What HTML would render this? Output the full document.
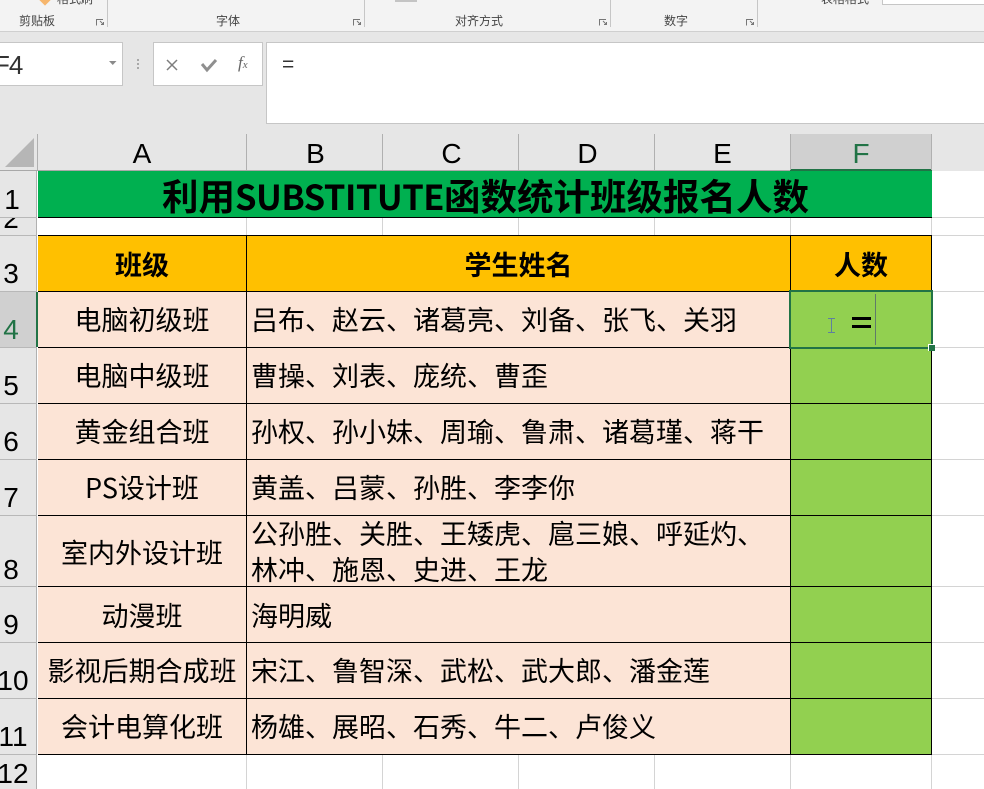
<!DOCTYPE html>
<html lang="zh"><head><meta charset="utf-8">
<style>
html,body{margin:0;padding:0;background:#fff}
#p{position:relative;width:984px;height:789px;overflow:hidden;background:#fff;font-family:"Liberation Sans","Noto Sans CJK SC",sans-serif;color:#000}
#p div{position:absolute;box-sizing:border-box}
.t{white-space:nowrap;font-family:"Noto Sans CJK SC","Liberation Sans",sans-serif;font-size:27px;line-height:40px;height:40px}
.c{text-align:center}
.hd{font-size:28px;line-height:36px;top:136px;height:36px;text-align:center;font-family:"Liberation Sans",sans-serif}
.rn{font-size:28px;line-height:34px;left:0;width:24px;text-align:center;font-family:"Liberation Sans",sans-serif}
.rb{font-size:12px;line-height:16px;color:#444;font-family:"Noto Sans CJK SC",sans-serif;top:13px;white-space:nowrap}
.s{background:#c6c6c6}
.b{background:#000}
</style></head><body><div id="p">
<!-- ribbon -->
<div style="left:0;top:0;width:984px;height:32px;background:#f3f3f3;border-bottom:1px solid #cfcfcf"></div>
<div style="left:0;top:32px;width:984px;height:102px;background:#e6e6e6"></div>
<div class="s" style="left:107px;top:0;width:1px;height:27px"></div>
<div class="s" style="left:364px;top:0;width:1px;height:27px"></div>
<div class="s" style="left:610px;top:0;width:1px;height:27px"></div>
<div class="s" style="left:757px;top:0;width:1px;height:27px"></div>
<div class="rb" style="left:19px">剪贴板</div>
<div class="rb" style="left:216px">字体</div>
<div class="rb" style="left:455px">对齐方式</div>
<div class="rb" style="left:664px">数字</div>
<div class="rb" style="left:821px;top:-9px">表格格式</div>
<div style="left:57px;top:-9px;font-size:12px;line-height:16px;color:#444;font-family:'Noto Sans CJK SC',sans-serif;white-space:nowrap">格式刷</div>
<div style="left:41px;top:-4px;width:8px;height:8px;background:#f6b66d;transform:rotate(45deg)"></div>
<div style="left:395px;top:0;width:22px;height:2px;background:#c4c4c4"></div>
<div style="left:882px;top:0;width:102px;height:5px;background:#fff;border-left:1px solid #c6c6c6;border-bottom:1px solid #c6c6c6"></div>
<svg style="position:absolute;left:0;top:0" width="984" height="32" fill="none" stroke="#777" stroke-width="1">
<path d="M96.500 25.500V19.500H103M100 21L103.500 24.500M103.500 22V24.500H101"/>
<path d="M353.500 25.500V19.500H360M357 21L360.500 24.500M360.500 22V24.500H358"/>
<path d="M599.500 25.500V19.500H606M603 21L606.500 24.500M606.500 22V24.500H604"/>
<path d="M746.500 25.500V19.500H753M750 21L753.500 24.500M753.500 22V24.500H751"/>
</svg>
<!-- name box -->
<div style="left:-2px;top:42px;width:125px;height:44px;background:#fff;border:1px solid #c6c6c6"></div>
<div style="left:-6px;top:47px;font-size:26px;line-height:36px;letter-spacing:-1px;color:#333">F4</div>
<svg style="position:absolute;left:105px;top:60px" width="16" height="8"><path d="M4 1H11.500L7.750 5Z" fill="#8a8a8a"/></svg>
<svg style="position:absolute;left:134px;top:56px" width="8" height="16" fill="#a8a8a8"><rect x="3" y="3" width="2" height="2"/><rect x="3" y="7" width="2" height="2"/><rect x="3" y="11" width="2" height="2"/></svg>
<!-- fx buttons -->
<div style="left:153px;top:42px;width:110px;height:44px;background:#fff;border:1px solid #c6c6c6"></div>
<svg style="position:absolute;left:153px;top:42px" width="110" height="44" fill="none">
<path d="M14 18L24 28M24 18L14 28" stroke="#7d7d7d" stroke-width="1.500"/>
<path d="M49 22L54 28L63 18" stroke="#8f8f8f" stroke-width="3"/>
<text x="85" y="26" font-family="Liberation Serif" font-style="italic" font-size="17" fill="#666">f<tspan font-size="11">x</tspan></text>
</svg>
<!-- formula -->
<div style="left:266px;top:42px;width:730px;height:82px;background:#fff;border:1px solid #c6c6c6"></div>
<div style="left:282px;top:49px;font-size:21px;line-height:32px;color:#333">=</div>
<!-- col header -->
<div style="left:0;top:134px;width:984px;height:37px;background:#e6e6e6"></div>
<div style="left:790px;top:134px;width:142px;height:36px;background:#d0d0d0"></div>
<div style="left:0;top:170px;width:790px;height:1px;background:#a8a8a8"></div>
<div style="left:790px;top:169px;width:142px;height:2px;background:#217346"></div>
<svg style="position:absolute;left:0;top:134px" width="38" height="36"><path d="M5 33L34 4V33Z" fill="#b6b6b6"/></svg>
<div style="left:37px;top:134px;width:1px;height:36px;background:#b0b0b0"></div>
<div style="left:246px;top:134px;width:1px;height:36px;background:#b0b0b0"></div>
<div style="left:382px;top:134px;width:1px;height:36px;background:#b0b0b0"></div>
<div style="left:518px;top:134px;width:1px;height:36px;background:#b0b0b0"></div>
<div style="left:654px;top:134px;width:1px;height:36px;background:#b0b0b0"></div>
<div style="left:790px;top:134px;width:1px;height:36px;background:#b0b0b0"></div>
<div style="left:931px;top:134px;width:1px;height:36px;background:#b0b0b0"></div>
<div class="hd" style="left:38px;width:208px">A</div>
<div class="hd" style="left:248px;width:135px">B</div>
<div class="hd" style="left:384px;width:135px">C</div>
<div class="hd" style="left:520px;width:135px">D</div>
<div class="hd" style="left:655px;width:135px">E</div>
<div class="hd" style="left:791px;width:140px;color:#217346">F</div>
<!-- row header -->
<div style="left:0;top:171px;width:37px;height:618px;background:#e6e6e6;border-right:1px solid #b0b0b0"></div>
<div style="left:0;top:292px;width:36px;height:55px;background:#d0d0d0"></div>
<div style="left:36px;top:292px;width:2px;height:55px;background:#217346"></div>
<div style="left:0;top:217px;width:37px;height:1px;background:#b8b8b8"></div>
<div style="left:0;top:235px;width:37px;height:1px;background:#b8b8b8"></div>
<div style="left:0;top:291px;width:37px;height:1px;background:#b8b8b8"></div>
<div style="left:0;top:347px;width:37px;height:1px;background:#b8b8b8"></div>
<div style="left:0;top:403px;width:37px;height:1px;background:#b8b8b8"></div>
<div style="left:0;top:459px;width:37px;height:1px;background:#b8b8b8"></div>
<div style="left:0;top:515px;width:37px;height:1px;background:#b8b8b8"></div>
<div style="left:0;top:586px;width:37px;height:1px;background:#b8b8b8"></div>
<div style="left:0;top:642px;width:37px;height:1px;background:#b8b8b8"></div>
<div style="left:0;top:698px;width:37px;height:1px;background:#b8b8b8"></div>
<div style="left:0;top:754px;width:37px;height:1px;background:#b8b8b8"></div>
<div class="rn" style="top:183px;left:0">1</div>
<div style="left:0;top:218px;width:37px;height:17px;overflow:hidden"><div class="rn" style="top:-16px;left:-1px">2</div></div>
<div class="rn" style="top:257px;left:-1px">3</div>
<div class="rn" style="top:313px;left:-1px;color:#217346">4</div>
<div class="rn" style="top:369px;left:-1px">5</div>
<div class="rn" style="top:425px;left:-1px">6</div>
<div class="rn" style="top:481px;left:-1px">7</div>
<div class="rn" style="top:553px;left:-1px">8</div>
<div class="rn" style="top:608px;left:-1px">9</div>
<div class="rn" style="top:664px;left:-4px;width:34px">10</div>
<div class="rn" style="top:720px;left:-4px;width:34px">11</div>
<div class="rn" style="top:757px;left:-4px;width:34px">12</div>
<!-- empty grid lines -->
<div style="left:246px;top:218px;width:1px;height:17px;background:#d4d4d4"></div>
<div style="left:382px;top:218px;width:1px;height:17px;background:#d4d4d4"></div>
<div style="left:518px;top:218px;width:1px;height:17px;background:#d4d4d4"></div>
<div style="left:654px;top:218px;width:1px;height:17px;background:#d4d4d4"></div>
<div style="left:790px;top:218px;width:1px;height:17px;background:#d4d4d4"></div>
<div style="left:931px;top:171px;width:1px;height:618px;background:#d4d4d4"></div>
<div style="left:246px;top:755px;width:1px;height:34px;background:#d4d4d4"></div>
<div style="left:382px;top:755px;width:1px;height:34px;background:#d4d4d4"></div>
<div style="left:518px;top:755px;width:1px;height:34px;background:#d4d4d4"></div>
<div style="left:654px;top:755px;width:1px;height:34px;background:#d4d4d4"></div>
<div style="left:790px;top:755px;width:1px;height:34px;background:#d4d4d4"></div>
<div style="left:932px;top:235px;width:52px;height:1px;background:#d4d4d4"></div>
<div style="left:932px;top:291px;width:52px;height:1px;background:#d4d4d4"></div>
<div style="left:932px;top:347px;width:52px;height:1px;background:#d4d4d4"></div>
<div style="left:932px;top:403px;width:52px;height:1px;background:#d4d4d4"></div>
<div style="left:932px;top:459px;width:52px;height:1px;background:#d4d4d4"></div>
<div style="left:932px;top:515px;width:52px;height:1px;background:#d4d4d4"></div>
<div style="left:932px;top:586px;width:52px;height:1px;background:#d4d4d4"></div>
<div style="left:932px;top:642px;width:52px;height:1px;background:#d4d4d4"></div>
<div style="left:932px;top:698px;width:52px;height:1px;background:#d4d4d4"></div>
<div style="left:932px;top:754px;width:52px;height:1px;background:#d4d4d4"></div>
<div style="left:932px;top:217px;width:52px;height:1px;background:#d4d4d4"></div>
<!-- fills -->
<div style="left:38px;top:171px;width:894px;height:46px;background:#00b050"></div>
<div style="left:38px;top:236px;width:894px;height:55px;background:#ffc000"></div>
<div style="left:38px;top:292px;width:752px;height:462px;background:#fce4d6"></div>
<div style="left:791px;top:292px;width:140px;height:462px;background:#92d050"></div>
<!-- black borders -->
<div class="b" style="left:38px;top:217px;width:894px;height:1px"></div>
<div class="b" style="left:38px;top:235px;width:894px;height:1px"></div>
<div class="b" style="left:38px;top:291px;width:894px;height:1px"></div>
<div class="b" style="left:38px;top:347px;width:894px;height:1px"></div>
<div class="b" style="left:38px;top:403px;width:894px;height:1px"></div>
<div class="b" style="left:38px;top:459px;width:894px;height:1px"></div>
<div class="b" style="left:38px;top:515px;width:894px;height:1px"></div>
<div class="b" style="left:38px;top:586px;width:894px;height:1px"></div>
<div class="b" style="left:38px;top:642px;width:894px;height:1px"></div>
<div class="b" style="left:38px;top:698px;width:894px;height:1px"></div>
<div class="b" style="left:38px;top:754px;width:894px;height:1px"></div>
<div class="b" style="left:246px;top:235px;width:1px;height:520px"></div>
<div class="b" style="left:790px;top:235px;width:1px;height:520px"></div>
<div class="b" style="left:931px;top:235px;width:1px;height:520px"></div>
<!-- title -->
<div class="t" style="left:162px;top:174px;font-size:36.500px;font-weight:700;line-height:42px;height:42px">利用<span style="font-size:34.500px;letter-spacing:-.5px">SUBSTITUTE</span>函数统计班级报名人数</div>
<!-- headers -->
<div class="t c" style="left:38px;width:208px;top:244px;font-weight:700">班级</div>
<div class="t c" style="left:247px;width:543px;top:244px;font-weight:700">学生姓名</div>
<div class="t c" style="left:791px;width:140px;top:244px;font-weight:700">人数</div>
<!-- col A -->
<div class="t c" style="left:38px;width:208px;top:299px">电脑初级班</div>
<div class="t c" style="left:38px;width:208px;top:355px">电脑中级班</div>
<div class="t c" style="left:38px;width:208px;top:411px">黄金组合班</div>
<div class="t c" style="left:38px;width:208px;top:467px">PS设计班</div>
<div class="t c" style="left:38px;width:208px;top:532px">室内外设计班</div>
<div class="t c" style="left:38px;width:208px;top:595px">动漫班</div>
<div class="t c" style="left:38px;width:208px;top:650px">影视后期合成班</div>
<div class="t c" style="left:38px;width:208px;top:706px">会计电算化班</div>
<!-- col B -->
<div class="t" style="left:251px;top:299px">吕布、赵云、诸葛亮、刘备、张飞、关羽</div>
<div class="t" style="left:251px;top:355px">曹操、刘表、庞统、曹歪</div>
<div class="t" style="left:251px;top:411px">孙权、孙小妹、周瑜、鲁肃、诸葛瑾、蒋干</div>
<div class="t" style="left:251px;top:467px">黄盖、吕蒙、孙胜、李李你</div>
<div class="t" style="left:251px;top:513px">公孙胜、关胜、王矮虎、扈三娘、呼延灼、</div>
<div class="t" style="left:251px;top:549px">林冲、施恩、史进、王龙</div>
<div class="t" style="left:251px;top:595px">海明威</div>
<div class="t" style="left:251px;top:650px">宋江、鲁智深、武松、武大郎、潘金莲</div>
<div class="t" style="left:251px;top:706px">杨雄、展昭、石秀、牛二、卢俊义</div>
<!-- selection -->
<div style="left:789px;top:290px;width:144px;height:59px;border:2px solid #217346"></div>
<div style="left:928px;top:344px;width:7px;height:7px;background:#217346;border-left:1px solid #fff;border-top:1px solid #fff"></div>
<div style="left:852px;top:317px;width:19px;height:3px;background:#000"></div>
<div style="left:852px;top:325px;width:19px;height:3px;background:#000"></div>
<div style="left:875px;top:294px;width:1px;height:51px;background:#5f7a6a"></div>
<svg style="position:absolute;left:826px;top:317px" width="12" height="18" fill="none" stroke="#5f7f9f" stroke-width="1"><path d="M2 1.500H9M5.500 1.500V15.500M2 15.500H9"/></svg>
</div></body></html>
